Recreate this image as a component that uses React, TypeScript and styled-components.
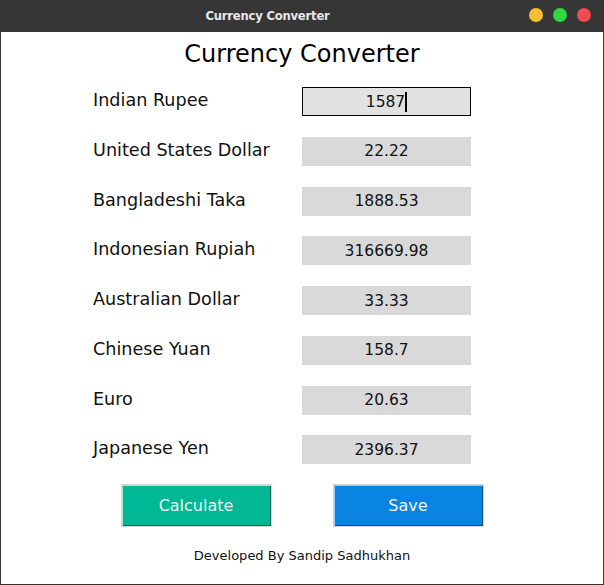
import React from "react";
import styled, { createGlobalStyle } from "styled-components";

const Global = createGlobalStyle`
  html, body { margin: 0; padding: 0; background: #ffffff; }
  body { font-family: "DejaVu Sans", "Liberation Sans", sans-serif; }
  * { box-sizing: border-box; }
`;

const Window = styled.div`
  width: 604px;
  height: 585px;
  display: flex;
  flex-direction: column;
  background: #ffffff;
  border: 1px solid #363636;
  border-top: none;
`;

const TitleBar = styled.div`
  height: 32px;
  flex: 0 0 32px;
  margin: 0 -1px;
  background: #363636;
  display: flex;
  align-items: center;
  position: relative;
`;

const TitleText = styled.div`
  flex: 1;
  text-align: center;
  padding-right: 69px;
  color: #e8e8e8;
  font-family: "DejaVu Sans", sans-serif;
  font-weight: bold;
  font-size: 11.6px;
  letter-spacing: -0.2px;
`;

const Dots = styled.div`
  position: absolute;
  right: 13px;
  top: 8px;
  display: flex;
  gap: 10px;
`;

const Dot = styled.span<{ $c: string }>`
  width: 14px;
  height: 14px;
  border-radius: 50%;
  background: ${(p) => p.$c};
`;

const Heading = styled.h1`
  margin: 6px 0 0;
  text-align: center;
  font-weight: normal;
  font-size: 24px;
  line-height: 32px;
  color: #000;
`;

const Form = styled.div`
  margin-top: 17px;
  padding-left: 92px;
  display: grid;
  grid-template-columns: 209px 169px;
  grid-auto-rows: 29px;
  row-gap: 20.78px;
  align-items: center;
`;

const Label = styled.div`
  font-size: 17.6px;
  color: #111;
  margin-top: -3px;
  white-space: nowrap;
`;

const Field = styled.div<{ $focus?: boolean }>`
  height: 29px;
  background: ${(p) => (p.$focus ? "#e2e2e2" : "#d9d9d9")};
  border: 1px solid ${(p) => (p.$focus ? "#000" : "#d9d9d9")};
  outline: ${(p) => (p.$focus ? "1px solid #fff" : "none")};
  display: flex;
  align-items: center;
  justify-content: center;
  font-size: 15.5px;
  color: #111;
`;

const Caret = styled.span`
  display: inline-block;
  width: 2px;
  height: 20px;
  background: #000;
  vertical-align: middle;
  margin-left: 0px;
`;

const Buttons = styled.div`
  margin-top: 20px;
  display: flex;
  justify-content: center;
  gap: 61px;
`;

const Btn = styled.button<{ $bg: string; $light: string; $dark: string }>`
  width: 151px;
  height: 43px;
  border: 1px solid #d6d6d6;
  padding: 0;
  background: ${(p) => p.$bg};
  box-shadow: inset 1px 1px 0 ${(p) => p.$light}, inset -1px -1px 0 ${(p) => p.$dark};
  color: #f4f4f4;
  font-family: "DejaVu Sans", sans-serif;
  font-size: 16px;
  cursor: pointer;
`;

const Footer = styled.div`
  margin-top: 21px;
  text-align: center;
  font-size: 13px;
  color: #111;
`;

const rows: [string, string][] = [
  ["United States Dollar", "22.22"],
  ["Bangladeshi Taka", "1888.53"],
  ["Indonesian Rupiah", "316669.98"],
  ["Australian Dollar", "33.33"],
  ["Chinese Yuan", "158.7"],
  ["Euro", "20.63"],
  ["Japanese Yen", "2396.37"],
];

export default function App() {
  return (
    <>
      <Global />
      <Window>
        <TitleBar>
          <TitleText>Currency Converter</TitleText>
          <Dots>
            <Dot $c="#f6be30" />
            <Dot $c="#2fd843" />
            <Dot $c="#f04a52" />
          </Dots>
        </TitleBar>
        <Heading>Currency Converter</Heading>
        <Form>
          <Label>Indian Rupee</Label>
          <Field $focus>
            1587<Caret />
          </Field>
          {rows.map(([l, v]) => (
            <React.Fragment key={l}>
              <Label>{l}</Label>
              <Field>{v}</Field>
            </React.Fragment>
          ))}
        </Form>
        <Buttons>
          <Btn $bg="#00b894" $light="#a8ecd6" $dark="#006b55">Calculate</Btn>
          <Btn $bg="#0984e3" $light="#9cc8f0" $dark="#054f89">Save</Btn>
        </Buttons>
        <Footer>Developed By Sandip Sadhukhan</Footer>
      </Window>
    </>
  );
}
